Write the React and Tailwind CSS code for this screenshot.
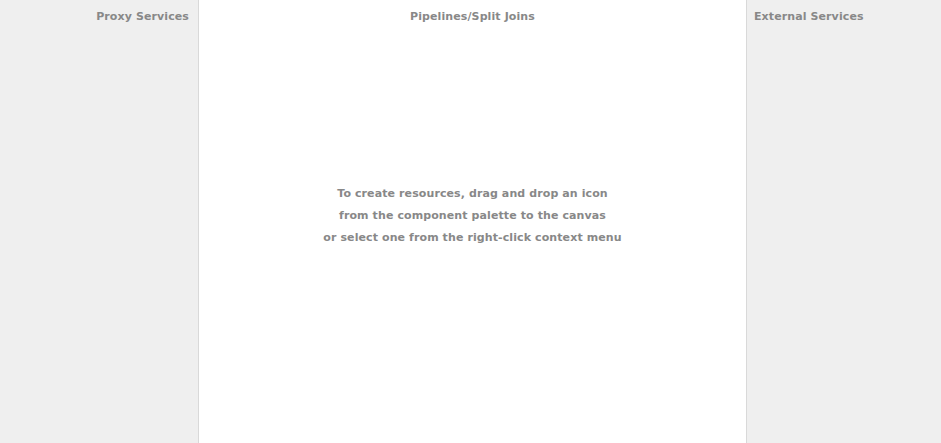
import React from 'react';

const Panel = ({ title, align, children, className }) => (
    <div className={`flex h-full flex-col ${className}`}>
        <div className={`pt-[8px] text-[11px] font-bold leading-[18px] tracking-[0.1px] text-[#888888] ${align}`}>
            {title}
        </div>
        {children}
    </div>
);

const App = () => {
    return (
        <div className="flex h-[443px] w-[941px] overflow-hidden bg-white font-['DejaVu_Sans',sans-serif]">
            <Panel
                title="Proxy Services"
                align="text-right pr-[9px]"
                className="w-[199px] shrink-0 border-r border-[#d9d9d9] bg-[#efefef]"
            />
            <Panel
                title="Pipelines/Split Joins"
                align="text-center"
                className="w-[547px] shrink-0 bg-white"
            >
                <div className="mt-[157px] text-center text-[11px] font-bold leading-[22px] tracking-[0.1px] text-[#888888]">
                    <p>To create resources, drag and drop an icon</p>
                    <p>from the component palette to the canvas</p>
                    <p>or select one from the right-click context menu</p>
                </div>
            </Panel>
            <Panel
                title="External Services"
                align="text-left pl-[7px]"
                className="flex-1 border-l border-[#d9d9d9] bg-[#efefef]"
            />
        </div>
    );
};

export default App;
